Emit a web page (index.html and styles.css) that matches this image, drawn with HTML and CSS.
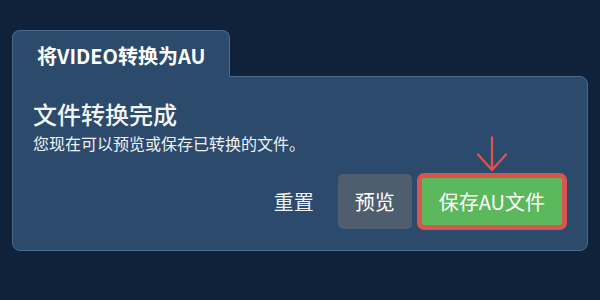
FILE: index.html
```html
<!DOCTYPE html>
<html lang="zh">
<head>
<meta charset="utf-8">
<link rel="stylesheet" href="styles.css">
</head>
<body>
<div class="wrap">
  <div class="tab">将VIDEO转换为AU</div>
  <div class="card">
    <h2 class="title">文件转换完成</h2>
    <p class="sub">您现在可以预览或保存已转换的文件。</p>
    <div class="actions">
      <button class="btn btn-reset">重置</button>
      <button class="btn btn-preview">预览</button>
      <div class="save-wrap">
        <svg class="arrow" width="32" height="36" viewBox="0 0 32 36">
          <path d="M16 1.5 V34 M2 18.5 L16 34 L30 18.5" fill="none" stroke="#d9534f" stroke-width="2.4" stroke-linecap="round" stroke-linejoin="round"/>
        </svg>
        <button class="btn btn-save">保存AU文件</button>
      </div>
    </div>
  </div>
</div>
</body>
</html>
```
FILE: styles.css
```css
html, body {
  margin: 0;
  padding: 0;
  background: #10223a;
  width: 600px;
  height: 300px;
  overflow: hidden;
  font-family: "Noto Sans CJK SC", "Noto Sans", sans-serif;
  color: #ffffff;
}
.wrap {
  padding: 30px 0 0 12px;
  width: 576px;
}
.tab {
  display: inline-block;
  position: relative;
  z-index: 1;
  box-sizing: border-box;
  height: 47px;
  padding: 3px 24px 0 24px;
  margin-bottom: -1px;
  background: #2c4a6b;
  border: 1px solid #4d6a8c;
  border-bottom: none;
  border-radius: 8px 8px 0 0;
  font-size: 20px;
  font-weight: bold;
  line-height: 44px;
  color: #ffffff;
}
.card {
  box-sizing: border-box;
  height: 175px;
  background: #2c4a6b;
  border: 1px solid #4d6a8c;
  border-radius: 0 8px 8px 8px;
  padding: 20px 20px 20px 20px;
  display: flex;
  flex-direction: column;
}
.title {
  margin: 0;
  font-size: 24px;
  font-weight: 500;
  line-height: 34px;
  color: #f2f5f8;
}
.sub {
  margin: 0;
  font-size: 16px;
  line-height: 24px;
  color: #eef2f6;
}
.actions {
  margin-top: auto;
  display: flex;
  justify-content: flex-end;
  align-items: center;
  gap: 5px;
}
.btn {
  font-family: inherit;
  font-size: 20px;
  line-height: 28px;
  color: #ffffff;
  border: none;
  cursor: pointer;
  padding: 0 17px;
}
.btn-reset {
  background: transparent;
  height: 55px;
  color: #eef2f6;
  padding: 0 19px 0 17px;
}
.btn-preview {
  background: #4e5e6f;
  height: 55px;
  border-radius: 5px;
}
.save-wrap {
  position: relative;
  display: flex;
}
.btn-save {
  background: #5cb85c;
  border: 5px solid #d9534f;
  border-radius: 7px;
  height: 57px;
  padding: 0 17px;
}
.arrow {
  position: absolute;
  left: 50%;
  margin-left: -16px;
  bottom: 100%;
  margin-bottom: 1px;
}
```
